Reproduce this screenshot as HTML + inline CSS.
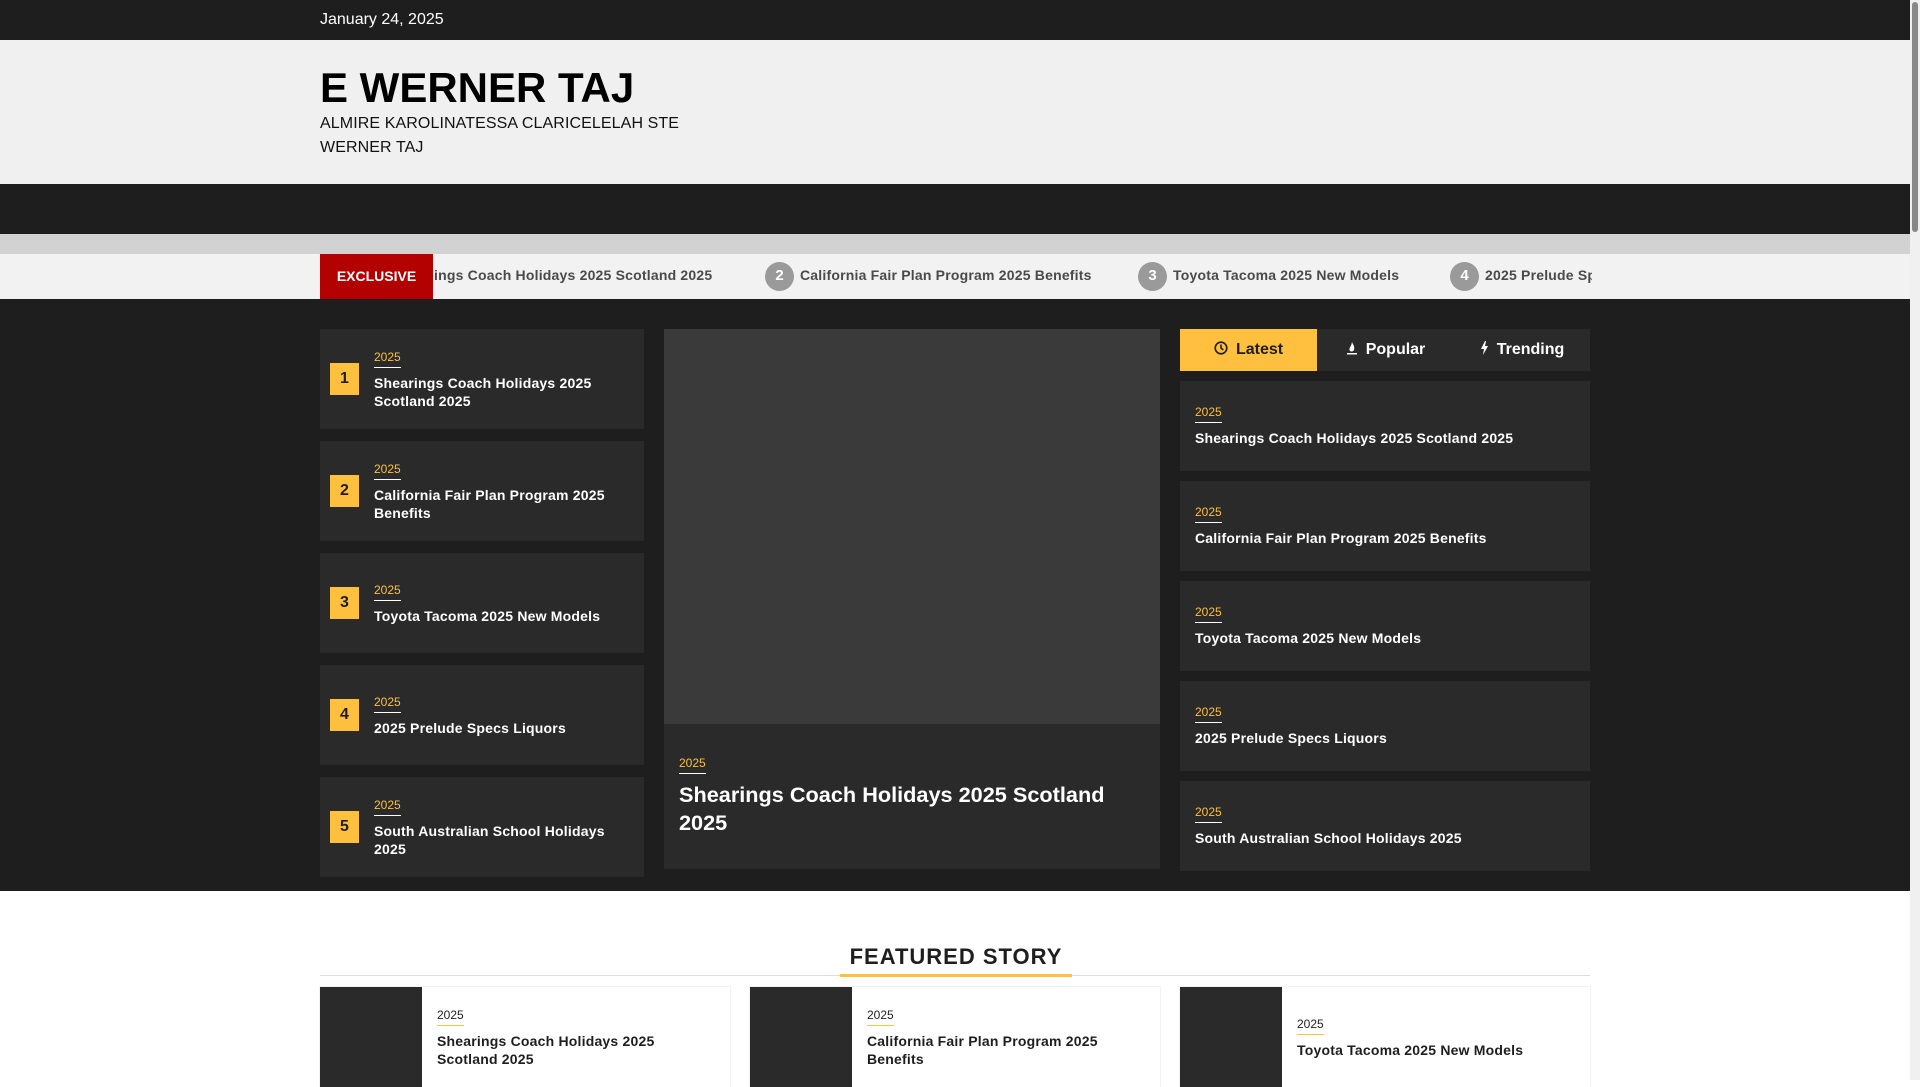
<!DOCTYPE html>
<html><head><meta charset="utf-8"><style>
*{margin:0;padding:0;box-sizing:border-box}
body{width:1920px;height:1080px;overflow:hidden;font-family:"Liberation Sans",Arial,sans-serif;background:#fff;position:relative}
.a{position:absolute}
.top{left:0;top:0;width:1910px;height:40px;background:#1e1e1e;color:#fff;font-size:16px;line-height:40px;padding-left:320px}
.hdr{left:0;top:40px;width:1910px;height:144px;background:#f0f0f0}
.nav{left:0;top:184px;width:1910px;height:50px;background:#1e1e1e}
.gray{left:0;top:234px;width:1910px;height:20px;background:#d2d2d2}
.tick{left:0;top:254px;width:1910px;height:45px;background:#f2f2f2;overflow:hidden}
.dark{left:0;top:299px;width:1910px;height:592px;background:#1e1e1e}
.sb{left:1910px;top:0;width:10px;height:1080px;background:#f0f0f0}
.sb div{position:absolute;left:2px;top:2px;width:6px;height:230px;background:#888;border-radius:3px}
.card{background:#2a2a2a}
.num{width:29px;height:32px;background:#ffbf3f;color:#1e1e1e;font-weight:bold;font-size:16px;text-align:center;line-height:32px}
.cat{color:#ffbf3f;font-size:12px;display:inline-block;border-bottom:1px solid #fff;padding-bottom:3px}
.t{color:#fff;font-weight:bold;font-size:14px;line-height:18px;letter-spacing:0.2px}
.ti{color:#4a4a4a;font-weight:bold;font-size:14px;white-space:nowrap;top:13px;letter-spacing:0.2px}
.tn{width:29px;height:29px;border-radius:50%;background:#9a9a9a;color:#fff;font-weight:bold;font-size:15px;text-align:center;line-height:27px;top:8px}
.fc{background:#fff;box-shadow:0 0 0 1px #f2f2f2}
.fc .img{position:absolute;left:0;top:0;width:102px;height:100px;background:#2a2a2a}
.fc .cat{color:#1e1e1e;border-bottom-color:#ffbf3f}
.fc .t{color:#1e1e1e}
</style></head><body>
<div class="a top">January 24, 2025</div>
<div class="a hdr">
<div class="a" style="left:320px;top:24px;font-size:42px;font-weight:bold;color:#000">E WERNER TAJ</div>
<div class="a" style="left:320px;top:72px;font-size:16px;line-height:24px;color:#111;width:380px;letter-spacing:0.1px">ALMIRE KAROLINATESSA CLARICELELAH STE WERNER TAJ</div>
</div>
<div class="a nav"></div>
<div class="a gray"></div>
<div class="a tick">
<div class="a ti" style="left:434px">ings Coach Holidays 2025 Scotland 2025</div>
<div class="a tn" style="left:765px">2</div><div class="a ti" style="left:800px">California Fair Plan Program 2025 Benefits</div>
<div class="a tn" style="left:1138px">3</div><div class="a ti" style="left:1173px">Toyota Tacoma 2025 New Models</div>
<div class="a tn" style="left:1450px">4</div><div class="a ti" style="left:1485px;width:107px;overflow:hidden">2025 Prelude Specs Liquors</div>
<div class="a" style="left:1592px;top:0;width:318px;height:45px;background:#f2f2f2"></div>
<div class="a" style="left:320px;top:0;width:113px;height:45px;background:#b30000;color:#fff;font-weight:bold;font-size:14px;text-align:center;line-height:45px">EXCLUSIVE</div>
</div>
<div class="a dark"></div>

<div class="a card" style="left:320px;top:329px;width:324px;height:100px"><div class="a num" style="left:10px;top:34px">1</div><div class="a" style="left:54px;top:19px"><span class="cat">2025</span><div class="t" style="margin-top:6px;width:250px">Shearings Coach Holidays 2025 Scotland 2025</div></div></div>
<div class="a card" style="left:320px;top:441px;width:324px;height:100px"><div class="a num" style="left:10px;top:34px">2</div><div class="a" style="left:54px;top:19px"><span class="cat">2025</span><div class="t" style="margin-top:6px;width:250px">California Fair Plan Program 2025 Benefits</div></div></div>
<div class="a card" style="left:320px;top:553px;width:324px;height:100px"><div class="a num" style="left:10px;top:34px">3</div><div class="a" style="left:54px;top:28px"><span class="cat">2025</span><div class="t" style="margin-top:6px;width:250px">Toyota Tacoma 2025 New Models</div></div></div>
<div class="a card" style="left:320px;top:665px;width:324px;height:100px"><div class="a num" style="left:10px;top:34px">4</div><div class="a" style="left:54px;top:28px"><span class="cat">2025</span><div class="t" style="margin-top:6px;width:250px">2025 Prelude Specs Liquors</div></div></div>
<div class="a card" style="left:320px;top:777px;width:324px;height:100px"><div class="a num" style="left:10px;top:34px">5</div><div class="a" style="left:54px;top:19px"><span class="cat">2025</span><div class="t" style="margin-top:6px;width:250px">South Australian School Holidays 2025</div></div></div>

<div class="a card" style="left:664px;top:329px;width:496px;height:540px">
<div class="a" style="left:0;top:0;width:496px;height:395px;background:#3a3a3a"></div>
<div class="a" style="left:15px;top:425px"><span class="cat">2025</span><div style="color:#fff;font-weight:bold;font-size:21.7px;line-height:28px;margin-top:7px;width:450px">Shearings Coach Holidays 2025 Scotland 2025</div></div>
</div>

<div class="a" style="left:1180px;top:329px;width:410px;height:42px;background:#2a2a2a"></div>
<div class="a" style="left:1180px;top:329px;width:137px;height:42px;background:#ffbf3f;color:#1e1e1e;font-weight:bold;font-size:16px;line-height:42px;text-align:center"><svg width="14" height="14" viewBox="0 0 14 14" style="vertical-align:-1px;margin-right:8px"><circle cx="7" cy="7" r="5.8" fill="none" stroke="#1e1e1e" stroke-width="1.6"/><path d="M7 3.5V7l2.3 2" fill="none" stroke="#1e1e1e" stroke-width="1.6"/></svg>Latest</div>
<div class="a" style="left:1317px;top:329px;width:137px;height:42px;color:#fff;font-weight:bold;font-size:16px;line-height:42px;text-align:center"><svg width="12" height="14" viewBox="0 0 12 14" style="vertical-align:-1px;margin-right:8px"><path d="M6 1C7 4 9 5 8 9 7 11 4 11 3.5 9 3 7 5 6 6 1Z" fill="#fff"/><rect x="1" y="12" width="10" height="1.5" fill="#fff"/></svg>Popular</div>
<div class="a" style="left:1454px;top:329px;width:136px;height:42px;color:#fff;font-weight:bold;font-size:16px;line-height:42px;text-align:center"><svg width="9" height="14" viewBox="0 0 9 14" style="vertical-align:-1px;margin-right:8px"><path d="M5 0L1 8h3L3 14 8 5H5L6 0Z" fill="#fff"/></svg>Trending</div>

<div class="a card" style="left:1180px;top:381px;width:410px;height:90px"><div class="a" style="left:15px;top:22px"><span class="cat">2025</span><div class="t" style="margin-top:6px">Shearings Coach Holidays 2025 Scotland 2025</div></div></div>
<div class="a card" style="left:1180px;top:481px;width:410px;height:90px"><div class="a" style="left:15px;top:22px"><span class="cat">2025</span><div class="t" style="margin-top:6px">California Fair Plan Program 2025 Benefits</div></div></div>
<div class="a card" style="left:1180px;top:581px;width:410px;height:90px"><div class="a" style="left:15px;top:22px"><span class="cat">2025</span><div class="t" style="margin-top:6px">Toyota Tacoma 2025 New Models</div></div></div>
<div class="a card" style="left:1180px;top:681px;width:410px;height:90px"><div class="a" style="left:15px;top:22px"><span class="cat">2025</span><div class="t" style="margin-top:6px">2025 Prelude Specs Liquors</div></div></div>
<div class="a card" style="left:1180px;top:781px;width:410px;height:90px"><div class="a" style="left:15px;top:22px"><span class="cat">2025</span><div class="t" style="margin-top:6px">South Australian School Holidays 2025</div></div></div>

<div class="a" style="left:320px;top:975px;width:1270px;height:1px;background:#ddd"></div>
<div class="a" style="left:840px;top:944px;width:232px;text-align:center;font-weight:bold;font-size:22px;color:#1e1e1e;letter-spacing:1px">FEATURED STORY</div>
<div class="a" style="left:840px;top:974px;width:232px;height:3px;background:#ffbf3f"></div>

<div class="a fc" style="left:320px;top:987px;width:410px;height:100px"><div class="img"></div><div class="a" style="left:117px;top:19px"><span class="cat">2025</span><div class="t" style="margin-top:6px;width:260px">Shearings Coach Holidays 2025 Scotland 2025</div></div></div>
<div class="a fc" style="left:750px;top:987px;width:410px;height:100px"><div class="img"></div><div class="a" style="left:117px;top:19px"><span class="cat">2025</span><div class="t" style="margin-top:6px;width:260px">California Fair Plan Program 2025 Benefits</div></div></div>
<div class="a fc" style="left:1180px;top:987px;width:410px;height:100px"><div class="img"></div><div class="a" style="left:117px;top:28px"><span class="cat">2025</span><div class="t" style="margin-top:6px;width:260px">Toyota Tacoma 2025 New Models</div></div></div>
<div class="a sb"><div></div></div>
</body></html>
